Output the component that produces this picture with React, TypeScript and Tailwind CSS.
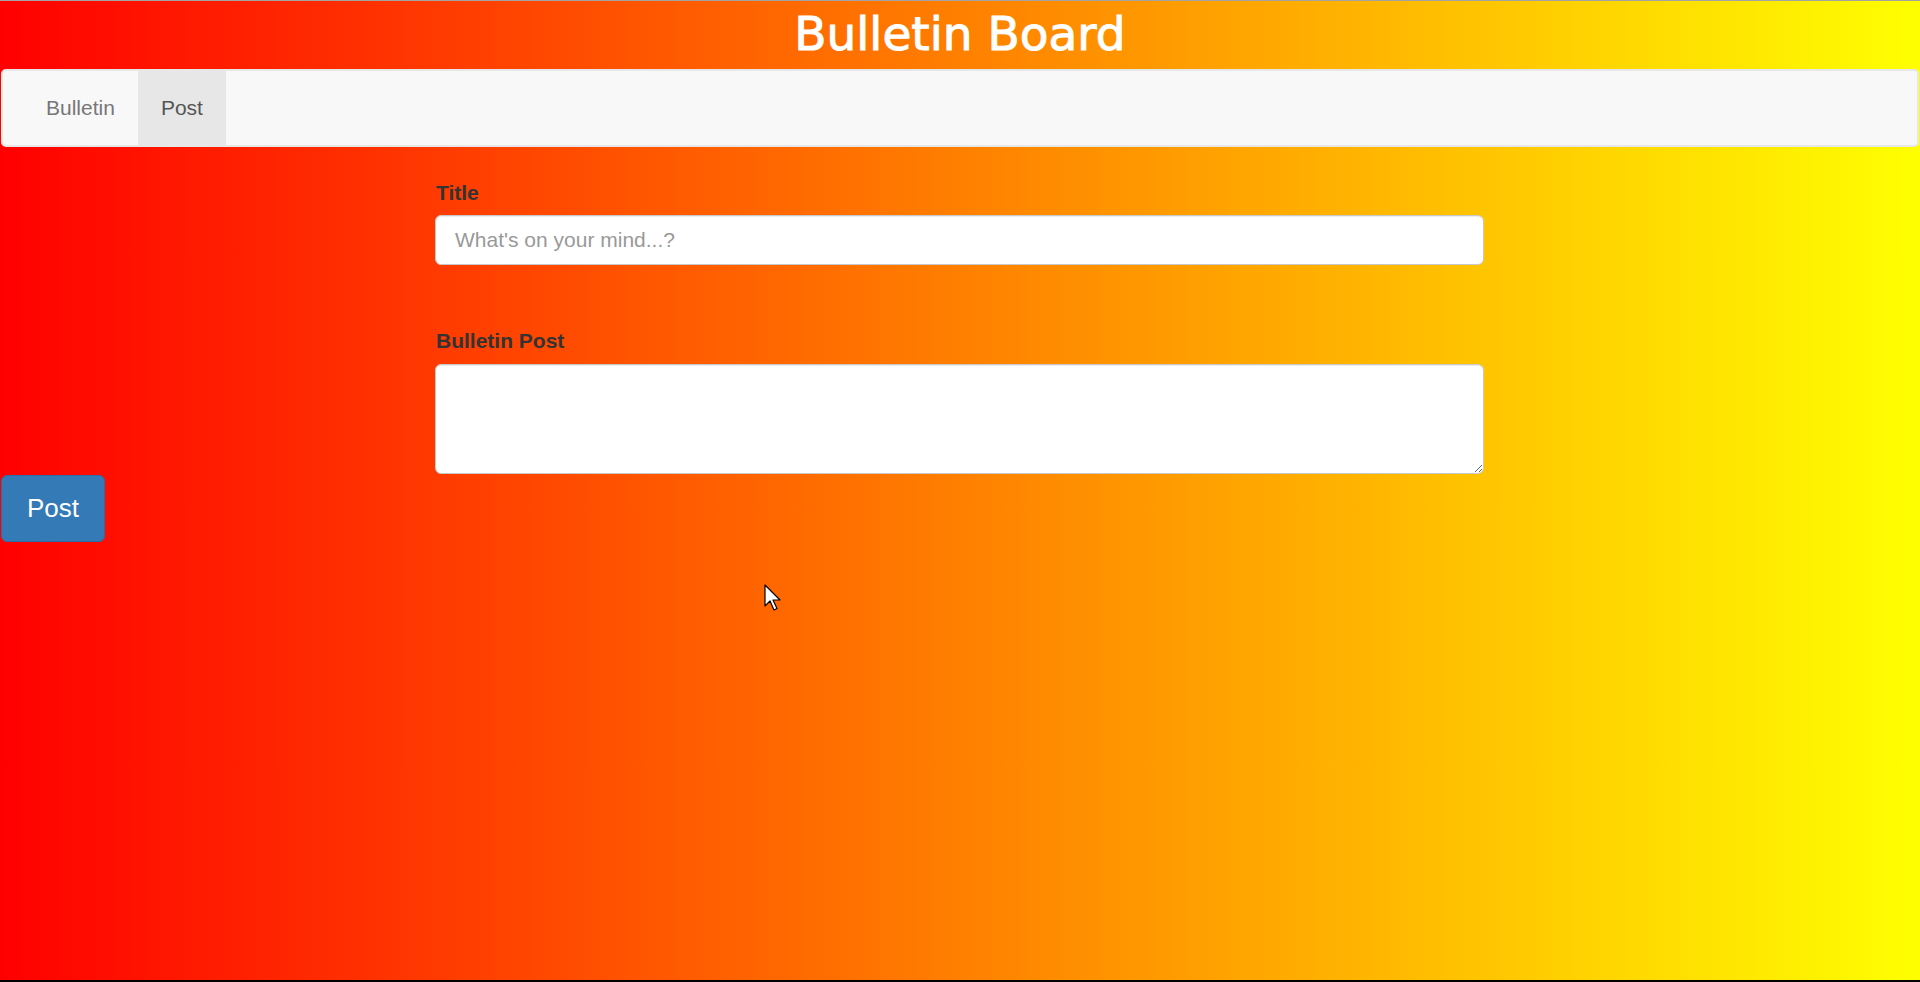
import { useState } from 'react'

const TABS = ['Bulletin', 'Post']

export default function App() {
  const [tab, setTab] = useState('Post')
  const [title, setTitle] = useState('')
  const [body, setBody] = useState('')

  return (
    <div className="relative min-h-screen flex flex-col border-t border-[#a3a3a3] bg-[linear-gradient(to_right,#ff0000,#ffff00)] font-['Liberation_Sans',Arial,sans-serif]">
      {/* Header */}
      <h1 className="h-[68px] flex items-center justify-center text-white text-[47px] leading-none font-['DejaVu_Sans',sans-serif] [-webkit-text-stroke:1px_white] pb-1">
        Bulletin Board
      </h1>

      {/* Navbar */}
      <nav className="mx-px h-[78px] rounded-[5px] border-2 border-[#e7e7e7] bg-[#f8f8f8] flex pl-[20px]">
        <ul className="flex">
          {TABS.map((t) => (
            <li key={t}>
              <button
                onClick={() => setTab(t)}
                className={`h-full px-[23px] text-[21px] ${tab === t ? 'bg-[#e7e7e7] text-[#555]' : 'text-[#777]'}`}
              >
                {t}
              </button>
            </li>
          ))}
        </ul>
      </nav>

      {/* Form */}
      <form className="ml-[435px] w-[1049px] pt-8" onSubmit={(e) => e.preventDefault()}>
        <label className="block text-[21px] leading-[28px] font-bold text-[#333] pl-px">Title</label>
        <input
          value={title}
          onChange={(e) => setTitle(e.target.value)}
          placeholder="What's on your mind...?"
          className="mt-2 block w-full h-[50px] px-[19px] text-[21px] text-[#555] bg-white rounded-[6px] border border-[#c8c8c8] shadow-[inset_0_1px_1px_rgba(0,0,0,0.075)] placeholder:text-[#999] outline-none"
        />

        <label className="block mt-[62px] text-[21px] leading-[28px] font-bold text-[#333] pl-px">Bulletin Post</label>
        <textarea
          value={body}
          onChange={(e) => setBody(e.target.value)}
          className="mt-[9px] block w-full h-[110px] px-[19px] py-2 text-[21px] text-[#555] bg-white rounded-[6px] border border-[#c8c8c8] shadow-[inset_0_1px_1px_rgba(0,0,0,0.075)] outline-none"
        />
      </form>

      <div className="pl-px pt-px">
        <button className="w-[104px] h-[67px] rounded-[6px] border border-[#2e6da4] bg-[#337ab7] text-white text-[26px]">
          Post
        </button>
      </div>

      <div className="flex-1" />
      <div className="h-[2px] bg-black" />

      {/* mouse pointer */}
      <svg className="absolute left-[764px] top-[583px]" width="19" height="28" viewBox="0 0 19 28">
        <path d="M1 1 L1 22 L6 17 L10 26 L13 24.5 L9 16 L16 16 Z" fill="#fff" stroke="#000" strokeWidth="1.2" strokeLinejoin="round" />
      </svg>
    </div>
  )
}
